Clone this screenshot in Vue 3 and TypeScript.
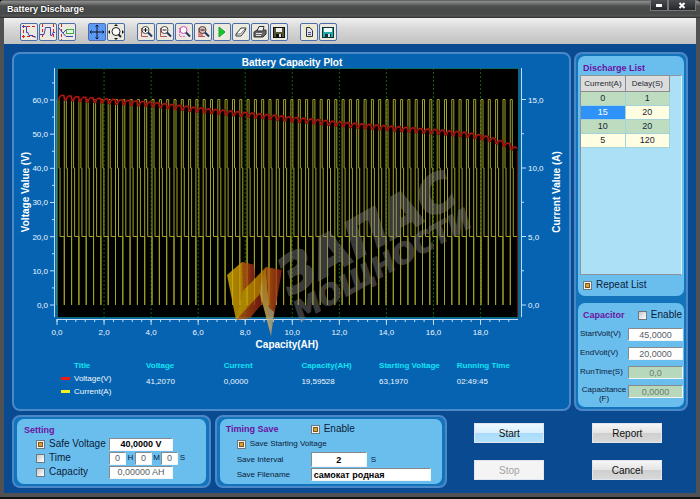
<script setup lang="ts">
import { ref } from 'vue'

// ---- Chart geometry -------------------------------------------------
const PLOT = { left: 43, right: 504, top: 14, bottom: 263 }
const ZERO_Y = 251
const sx = (ah: number): number => PLOT.left + ah * 23.53
const sv = (volt: number): number => ZERO_Y - volt * 3.417
const sa = (amp: number): number => ZERO_Y - amp * 13.7

const fmt = (n: number): string => n.toFixed(1).replace('.', ',')

const voltTicks = [0, 10, 20, 30, 40, 50, 60]
const voltMinor = [5, 15, 25, 35, 45, 55, 65]
const ampTicks = [0, 5, 10, 15]
const ampMinor = [2.5, 7.5, 12.5]
const ahTicks = [0, 2, 4, 6, 8, 10, 12, 14, 16, 18]
const ahMinor = Array.from({ length: 50 }, (_, i) => i * 0.4).filter((v) => v < 19.6)

// ---- Series ---------------------------------------------------------
const CYCLES = 63
const CYCLE_AH = 0.3107

const current = (() => {
  const pts: string[] = []
  for (let i = 0; i < CYCLES; i++) {
    const x = sx(i * CYCLE_AH)
    const end = Math.min(x + 7.3, PLOT.right)
    pts.push(
      `${x.toFixed(1)},${sa(0)}`,
      `${x.toFixed(1)},${sa(15)}`,
      `${(x + 2).toFixed(1)},${sa(15)}`,
      `${(x + 2).toFixed(1)},${sa(10)}`,
      `${(x + 3).toFixed(1)},${sa(10)}`,
      `${(x + 3).toFixed(1)},${sa(5)}`,
      `${end.toFixed(1)},${sa(5)}`,
    )
  }
  return pts.join(' ')
})()

const envelope: [number, number][] = [
  [43, 42], [66, 44], [106, 47], [136, 49], [186, 55], [226, 59], [286, 65],
  [336, 70], [386, 74], [426, 77], [456, 80], [476, 84], [496, 91], [504, 96],
]

const envelopeAt = (x: number): number => {
  for (let i = 1; i < envelope.length; i++) {
    const [x0, y0] = envelope[i - 1]
    const [x1, y1] = envelope[i]
    if (x <= x1) return y0 + ((y1 - y0) * (x - x0)) / (x1 - x0)
  }
  return envelope[envelope.length - 1][1]
}

const voltage = (() => {
  const pts: string[] = [`43,${envelopeAt(43) + 3}`]
  for (let i = 0; i < CYCLES; i++) {
    const x = sx(i * CYCLE_AH)
    const steps: [number, number][] = [[0.3, 3], [2, 3], [2.4, 1], [3.4, 0], [4.4, -1], [7, -1]]
    for (const [dx, dy] of steps) {
      const px = Math.min(x + dx, PLOT.right)
      pts.push(`${px.toFixed(1)},${(envelopeAt(px) + dy).toFixed(1)}`)
    }
  }
  return pts.join(' ')
})()

// ---- Readouts -------------------------------------------------------
const readouts = [
  { title: 'Voltage', value: '41,2070' },
  { title: 'Current', value: '0,0000' },
  { title: 'Capacity(AH)', value: '19,59528' },
  { title: 'Starting Voltage', value: '63,1970' },
  { title: 'Running Time', value: '02:49:45' },
]

const steps = [
  { current: 0, delay: 1 },
  { current: 15, delay: 20 },
  { current: 10, delay: 20 },
  { current: 5, delay: 120 },
]
const selected = ref(1)

// ---- Form state -----------------------------------------------------
const repeatList = ref(true)
const capEnable = ref(false)
const startVolt = ref('45,0000')
const endVolt = ref('20,0000')
const runTime = ref('0,0')
const capacitance = ref('0,0000')
const useSafeVoltage = ref(true)
const safeVoltage = ref('40,0000 V')
const useTime = ref(false)
const hours = ref('0')
const minutes = ref('0')
const seconds = ref('0')
const useCapacity = ref(false)
const capacityLimit = ref('0,00000 AH')
const timingEnable = ref(true)
const saveStarting = ref(true)
const saveInterval = ref('2')
const fileName = ref('самокат родная')
</script>

<template>
  <div class="window">
    <header class="titlebar">
      <h1>Battery Discharge</h1>
      <div class="winbtns">
        <button type="button" class="min" aria-label="Minimize">
          <svg width="8" height="6" viewBox="0 0 8 6"><rect x="1" y="2" width="6" height="3" fill="#fff" /></svg>
        </button>
        <button type="button" class="close" aria-label="Close">
          <svg width="8" height="7" viewBox="0 0 8 7"><path d="M1.5 1L6.5 6M6.5 1L1.5 6" stroke="#fff" stroke-width="2" /></svg>
        </button>
      </div>
    </header>

    <nav class="toolbar" aria-label="Tools">
      <div class="group">
        <button type="button" aria-label="Vertical cursors">
          <svg viewBox="0 0 16 16"><path d="M1 2.500H15M1 12.500H15M2.500 1V15" stroke="#d22" stroke-dasharray="3 2" /><path d="M1 2.500H5.500V8.500H7L8 11.500H12L13 13H15" fill="none" stroke="#44b" /></svg>
        </button>
        <button type="button" aria-label="Range cursors">
          <svg viewBox="0 0 16 16"><path d="M2.500 0V15M13.500 0V15" stroke="#d22" stroke-dasharray="3 2" /><path d="M0 10.500H4L5.500 3.500H10.500V11.500H12L13 8.500H15" fill="none" stroke="#44b" /></svg>
        </button>
        <button type="button" aria-label="Data label">
          <svg viewBox="0 0 16 16"><path d="M2.500 0V16" stroke="#d22" stroke-dasharray="3 2" /><path d="M0 4L3 8L7 12.500H14M4 9L8 5" fill="none" stroke="#44b" /><rect x="7.500" y="5.500" width="7" height="4" fill="#e8f6e4" stroke="#4a4" /></svg>
        </button>
      </div>
      <div class="group">
        <button type="button" class="on" aria-label="Pan">
          <svg viewBox="0 0 16 16"><path d="M8 1V15M1 8H15M6.500 2.500L8 1L9.500 2.500M6.500 13.500L8 15L9.500 13.500M2.500 6.500L1 8L2.500 9.500M13.500 6.500L15 8L13.500 9.500" fill="none" stroke="#112" /></svg>
        </button>
        <button type="button" aria-label="Zoom window">
          <svg viewBox="0 0 16 16"><circle cx="8" cy="7.500" r="4" fill="#fff" stroke="#222" /><path d="M10.500 10.500L13 13" stroke="#222" stroke-width="2" /><path d="M8 0L10 2H6ZM8 16L10 14H6ZM0 8L2 6V10ZM16 8L14 6V10Z" fill="#111" /></svg>
        </button>
      </div>
      <div class="group">
        <button v-for="kind in ['in', 'out', 'box', 'reset']" :key="kind" type="button" :aria-label="'Zoom ' + kind">
          <svg viewBox="0 0 16 16">
            <path d="M3.500 4V12.500H10" fill="none" :stroke="kind === 'box' ? '#e6c' : '#b55'" :stroke-dasharray="kind === 'box' ? '2 1' : undefined" />
            <path v-if="kind === 'reset'" d="M3 4H8V12H3Z" fill="#d88" />
            <circle cx="7.500" cy="6" r="3.500" :fill="kind === 'reset' ? '#dbb' : '#fff'" :stroke="kind === 'box' ? '#c4b' : '#444'" />
            <path d="M10 8.500L14 12.500" stroke="#236" stroke-width="2" />
            <path v-if="kind !== 'box'" d="M5.500 6H9.500" stroke="#111" />
            <path v-if="kind === 'in'" d="M7.500 4V8" stroke="#111" />
          </svg>
        </button>
        <button type="button" aria-label="Run">
          <svg viewBox="0 0 16 16"><path d="M5 3L11 8L5 13Z" fill="#1c2" stroke="#294" /></svg>
        </button>
        <button type="button" aria-label="Clear">
          <svg viewBox="0 0 16 16"><path d="M3 10L8 4H13L12 7L8 12H3Z" fill="#fff" stroke="#333" /><path d="M3 10H7.500L13 4" fill="none" stroke="#666" /></svg>
        </button>
        <button type="button" aria-label="Print">
          <svg viewBox="0 0 16 16"><path d="M2 8L5 6H14V10L11 13H2Z" fill="#666" stroke="#333" /><path d="M5 7L7 2.500H12L11 7Z" fill="#eee" stroke="#333" /><path d="M4 9.500H10M4 11.500H9" stroke="#ddd" /></svg>
        </button>
        <button type="button" aria-label="Save">
          <svg viewBox="0 0 16 16"><rect x="2.500" y="3.500" width="11" height="10" fill="#553" stroke="#111" /><rect x="5" y="4" width="6" height="4" fill="#eee" /><rect x="5" y="10" width="6" height="3" fill="#111" /><rect x="8" y="10" width="2" height="3" fill="#ddd" /></svg>
        </button>
      </div>
      <div class="group">
        <button type="button" aria-label="Copy report">
          <svg viewBox="0 0 16 16"><path d="M2 2L14 14M14 2L2 14M8 1V15" stroke="#ee5" stroke-dasharray="2 1" /><path d="M5.500 3.500H9L11.500 6.500V12.500H5.500Z" fill="#dde" stroke="#333" /><path d="M7 8.500H10M7 10.500H10" stroke="#558" /></svg>
        </button>
        <button type="button" aria-label="Save data">
          <svg viewBox="0 0 16 16"><rect x="2.500" y="3.500" width="11" height="10" fill="#2aa" stroke="#133" /><rect x="4" y="4" width="8" height="4" fill="#eff" /><rect x="5" y="10" width="6" height="3" fill="#134" /><rect x="8" y="10" width="2" height="3" fill="#ddd" /></svg>
        </button>
      </div>
    </nav>

    <main class="body">
      <div class="upper">
        <section class="panel chart-panel" aria-label="Battery Capacity Plot">
          <svg class="chart" viewBox="0 0 555 298">
            <defs>
              <linearGradient id="leafA" x1="0" y1="0" x2="1" y2="0"><stop offset="0" stop-color="#d8b400" /><stop offset="1" stop-color="#c07400" /></linearGradient>
              <linearGradient id="leafB" x1="0" y1="0" x2="1" y2="0"><stop offset="0" stop-color="#c86a10" /><stop offset="1" stop-color="#8a1c14" /></linearGradient>
              <linearGradient id="leafC" x1="0" y1="0" x2="0" y2="1"><stop offset="0" stop-color="#c88410" /><stop offset="1" stop-color="#d8c070" /></linearGradient>
            </defs>
            <text class="heading" x="278" y="12" text-anchor="middle">Battery Capacity Plot</text>

            <rect x="43" y="14" width="461" height="249" fill="#000" />
            <g class="grid">
              <line v-for="t in ahTicks.slice(1)" :key="t" :x1="sx(t)" :x2="sx(t)" :y1="PLOT.top" :y2="PLOT.bottom" />
            </g>
            <polyline class="current" :points="current" />
            <path d="M503.500 96V263" stroke="#700c10" />
            <polyline class="volt-shade" :points="voltage" />
            <polyline class="voltage" :points="voltage" />
            <rect x="43.500" y="14.500" width="461" height="249" fill="none" stroke="#0b6a68" />

            <g class="axis">
              <path d="M40.500 14V263M507.500 14V263M43 265.500H504" />
              <line v-for="t in voltTicks" :key="'v' + t" x1="36" x2="40" :y1="sv(t)" :y2="sv(t)" />
              <line v-for="t in voltMinor" :key="'vm' + t" x1="38" x2="40" :y1="sv(t)" :y2="sv(t)" />
              <line v-for="t in ampTicks" :key="'a' + t" x1="508" x2="512" :y1="sa(t)" :y2="sa(t)" />
              <line v-for="t in ampMinor" :key="'am' + t" x1="508" x2="510" :y1="sa(t)" :y2="sa(t)" />
              <line v-for="t in ahTicks" :key="'x' + t" :x1="sx(t)" :x2="sx(t)" y1="265" y2="271" />
              <line v-for="t in ahMinor" :key="'xm' + t" :x1="sx(t)" :x2="sx(t)" y1="265" y2="268" />
            </g>
            <g class="ticktext">
              <text v-for="t in voltTicks" :key="'v' + t" x="34" :y="sv(t) + 3" text-anchor="end">{{ fmt(t) }}</text>
              <text v-for="t in ampTicks" :key="'a' + t" x="514" :y="sa(t) + 3">{{ fmt(t) }}</text>
              <text v-for="t in ahTicks" :key="'x' + t" :x="sx(t)" y="281" text-anchor="middle">{{ fmt(t) }}</text>
            </g>

            <g opacity="0.8">
              <path d="M213 221L228 208L240 211L241 223L229 240L222 266Z" fill="url(#leafA)" />
              <path d="M228 208L240 211L241 224L229 238Z" fill="url(#leafB)" />
              <path d="M222 265L229 237L252 213L248 238L246 250L236 264Z" fill="url(#leafA)" />
              <path d="M222 266L246 240L248 250L236 264Z" fill="url(#leafB)" />
              <path d="M245 236L252 213L257 282Z" fill="url(#leafC)" />
              <path d="M252 213L268 216L260 262L257 282Z" fill="url(#leafB)" />
              <path d="M253 252L260 258L257 282Z" fill="#b9a878" />
            </g>
            <g class="watermark">
              <text class="big" transform="translate(276 242) rotate(-29)">ЗАПАС</text>
              <text class="small" transform="translate(286 268) rotate(-29)">МОЩНОСТИ</text>
            </g>

            <text class="heading" x="273" y="294" text-anchor="middle">Capacity(AH)</text>
            <text class="heading" transform="translate(15 138) rotate(-90)" text-anchor="middle">Voltage Value (V)</text>
            <text class="heading" transform="translate(546 138) rotate(-90)" text-anchor="middle">Current Value (A)</text>
          </svg>

          <table class="readouts">
            <thead>
              <tr>
                <th class="first">Title</th>
                <th v-for="r in readouts" :key="r.title" class="col">{{ r.title }}</th>
              </tr>
            </thead>
            <tbody>
              <tr>
                <td class="legend red">Voltage(V)</td>
                <td v-for="r in readouts" :key="r.title" rowspan="2" class="value">{{ r.value }}</td>
              </tr>
              <tr>
                <td class="legend yellow">Current(A)</td>
              </tr>
            </tbody>
          </table>
        </section>

        <aside class="panel side">
          <section class="card list-card">
            <h2>Discharge List</h2>
            <div class="listbox">
              <table>
                <thead>
                  <tr><th>Current(A)</th><th>Delay(S)</th></tr>
                </thead>
                <tbody>
                  <tr v-for="(s, i) in steps" :key="i" @click="selected = i">
                    <td :class="{ sel: selected === i }">{{ s.current }}</td>
                    <td>{{ s.delay }}</td>
                  </tr>
                </tbody>
              </table>
            </div>
            <label class="check"><input v-model="repeatList" type="checkbox" />Repeat List</label>
          </section>

          <section class="card cap-card">
            <div class="cap-head">
              <h2>Capacitor</h2>
              <label class="check"><input v-model="capEnable" type="checkbox" />Enable</label>
            </div>
            <div class="cap-grid">
              <label for="sv">StartVolt(V)</label><input id="sv" v-model="startVolt" type="text" />
              <label for="ev">EndVolt(V)</label><input id="ev" v-model="endVolt" type="text" />
              <label for="rt">RunTime(S)</label><input id="rt" v-model="runTime" class="ro" type="text" readonly />
              <label for="cp" class="two">Capacitance<br />(F)</label><input id="cp" v-model="capacitance" class="ro" type="text" readonly />
            </div>
          </section>
        </aside>
      </div>

      <div class="lower">
        <section class="panel">
          <div class="card setting">
            <h2>Setting</h2>
            <div class="srow">
              <label class="check"><input v-model="useSafeVoltage" type="checkbox" />Safe Voltage</label>
              <input v-model="safeVoltage" class="strong" type="text" aria-label="Safe Voltage value" />
            </div>
            <div class="srow">
              <label class="check"><input v-model="useTime" type="checkbox" />Time</label>
              <div class="hms">
                <input id="hh" v-model="hours" type="text" /><label for="hh">H</label>
                <input id="mm" v-model="minutes" type="text" /><label for="mm">M</label>
                <input id="ss" v-model="seconds" type="text" /><label for="ss">S</label>
              </div>
            </div>
            <div class="srow">
              <label class="check"><input v-model="useCapacity" type="checkbox" />Capacity</label>
              <input v-model="capacityLimit" type="text" aria-label="Capacity value" />
            </div>
          </div>
        </section>

        <section class="panel">
          <div class="card timing">
            <div class="trow">
              <h2>Timing Save</h2>
              <label class="check"><input v-model="timingEnable" type="checkbox" />Enable</label>
            </div>
            <label class="check tiny"><input v-model="saveStarting" type="checkbox" />Save Starting Voltage</label>
            <div class="trow indent">
              <label for="si">Save Interval</label>
              <div class="interval"><input id="si" v-model="saveInterval" class="strong" type="text" /><span>S</span></div>
            </div>
            <div class="trow indent">
              <label for="fn">Save Filename</label>
              <input id="fn" v-model="fileName" class="strong file" type="text" />
            </div>
          </div>
        </section>

        <div class="actions">
          <button type="button" class="primary">Start</button>
          <button type="button">Report</button>
          <button type="button" disabled>Stop</button>
          <button type="button">Cancel</button>
        </div>
      </div>
    </main>
  </div>
</template>

<style>
body {
  margin: 0;
  background: #111;
}
</style>

<style scoped>
.window,
.window * {
  box-sizing: border-box;
}
.window {
  display: flex;
  flex-direction: column;
  min-height: 100vh;
  padding: 0 4px 4px;
  background: #4f5152;
  border-bottom: 2px solid #111;
  border-radius: 4px 4px 0 0;
  font-family: 'Liberation Sans', Arial, sans-serif;
  font-size: 10px;
  line-height: 12px;
  color: #0a2038;
}
h1,
h2 {
  margin: 0;
  font-weight: bold;
}
input,
button {
  font-family: inherit;
  margin: 0;
}

.titlebar {
  display: flex;
  justify-content: space-between;
  align-items: center;
  height: 18px;
  margin: 0 -4px;
  padding: 0 4px 0 7px;
  background: linear-gradient(#3c3c3c 0, #8c8c8c 1px, #7a7a7a 3px, #4c4e4e 6px, #484a4a 14px, #555 16px, #2c2c2c 18px);
  border-radius: 4px 4px 0 0;
}
.titlebar h1 {
  font-size: 9px;
  line-height: 16px;
  color: #fff;
  text-shadow: 0 0 2px #000;
}
.winbtns {
  display: flex;
  align-self: flex-start;
}
.winbtns button {
  display: flex;
  align-items: center;
  justify-content: center;
  height: 11px;
  padding: 0;
  background: linear-gradient(#4a4d50, #24282c);
  border: 1px solid #777;
  border-top: 0;
}
.min {
  width: 18px;
}
.close {
  width: 28px;
}

.toolbar {
  display: flex;
  gap: 12px;
  align-items: flex-end;
  height: 26px;
  padding: 0 16px 3px;
  background: linear-gradient(#f0f0f0, #d8d8d8 40%, #c2c2c2);
}
.group {
  display: flex;
  gap: 1px;
}
.group button {
  width: 18px;
  height: 18px;
  padding: 0;
  background: #ece9e0;
  border: 1px solid #4a6fa8;
  border-radius: 2px;
}
.group button.on {
  background: #5b9bf5;
}
.group svg {
  display: block;
  width: 16px;
  height: 16px;
}

.body {
  flex: 1;
  display: flex;
  flex-direction: column;
  gap: 4px;
  padding: 8px 8px 5px;
  background: #0a4a90;
}
.upper {
  display: grid;
  grid-template-columns: minmax(0, 1fr) 114px;
  gap: 3px;
}
.panel {
  border: 2px solid #4a88c8;
  border-radius: 8px;
  background: #1373bb;
}
.chart-panel {
  background: #0563b1;
  padding-bottom: 11px;
}
.chart {
  display: block;
  width: 100%;
  height: auto;
}
.heading {
  font-size: 10px;
  font-weight: bold;
  fill: #fff;
}
.ticktext {
  font-size: 8px;
  fill: #f0f8ff;
}
.grid line {
  stroke: #0b6410;
  stroke-dasharray: 2 2;
}
.axis {
  fill: none;
  stroke: #c3ddf3;
}
.current {
  fill: none;
  stroke: #a3a326;
}
.volt-shade {
  fill: none;
  stroke: #6c0a06;
  stroke-width: 2;
}
.voltage {
  fill: none;
  stroke: #c01c14;
}
.watermark {
  font-family: 'DejaVu Sans', sans-serif;
  font-weight: bold;
  font-style: italic;
  fill: #808080;
  stroke: #808080;
  opacity: 0.45;
}
.big {
  font-size: 51px;
  stroke-width: 2;
}
.small {
  font-size: 28px;
  stroke-width: 1;
}

.readouts {
  width: 100%;
  table-layout: fixed;
  border-collapse: collapse;
  margin-top: 7px;
  font-size: 8px;
  color: #f0f8ff;
}
.readouts th,
.readouts td {
  padding: 0;
  text-align: left;
  white-space: nowrap;
  height: 13px;
  line-height: 13px;
}
.readouts th {
  color: #12e4f4;
}
.readouts .first {
  width: 132px;
  padding-left: 60px;
}
.readouts .col {
  width: 14%;
}
.readouts .col:last-child {
  width: auto;
}
.readouts .value {
  vertical-align: top;
  line-height: 19px;
}
.readouts .legend {
  padding-left: 60px;
}
.legend::before {
  content: '';
  display: inline-block;
  width: 9px;
  height: 3px;
  margin: 0 4px 0 -13px;
  vertical-align: 1px;
}
.red::before {
  background: #f01818;
}
.yellow::before {
  background: #f4f020;
}

.side {
  display: flex;
  flex-direction: column;
  gap: 7px;
  padding: 2px;
}
.card {
  background: #6abeee;
  border-radius: 7px;
}
.card h2 {
  font-size: 9px;
  line-height: 12px;
  color: #6a12a0;
}
.list-card {
  flex: 1;
  display: flex;
  flex-direction: column;
  padding: 6px 2px 4px;
}
.list-card h2 {
  padding-left: 3px;
}
.listbox {
  flex: 1;
  margin-top: 1px;
  background: #ace0f6;
  border: 1px solid #8a9499;
  border-right-color: #dff3fc;
}
.listbox table {
  width: 89%;
  table-layout: fixed;
  border-collapse: collapse;
  font-size: 9px;
  line-height: 13px;
  text-align: center;
  color: #1c2830;
}
.listbox th {
  height: 15px;
  padding: 0;
  font-size: 8px;
  font-weight: normal;
  background: #dcdcdc;
  border: 1px solid #8c8c8c;
  border-width: 0 1px 1px 0;
}
.listbox td {
  height: 14px;
  padding: 0;
  border: 1px solid #a4d4da;
  border-width: 0 1px 1px 0;
  background: #fffde2;
}
.listbox tbody tr:nth-child(odd) td {
  background: #bedcc0;
}
.listbox tbody tr td.sel {
  background: #2e92f8;
  color: #fff;
}
.check {
  display: flex;
  align-items: center;
  gap: 4px;
  font-size: 10px;
  line-height: 14px;
  white-space: nowrap;
}
.list-card .check {
  margin-top: 3px;
  padding-left: 3px;
}
input[type='checkbox'] {
  appearance: none;
  flex: none;
  width: 9px;
  height: 9px;
  border: 1px solid #6e7880;
  background: linear-gradient(135deg, #c4c8cc, #fff);
}
input[type='checkbox']:checked {
  background: linear-gradient(#e79a26, #e79a26) center / 3px 3px no-repeat, linear-gradient(#765a30, #765a30) center / 5px 5px no-repeat, #f2f2ee;
}
input[type='text'] {
  min-width: 0;
  width: 100%;
  height: 13px;
  padding: 0;
  font-size: 9px;
  line-height: 11px;
  text-align: center;
  color: #5a6066;
  background: #fff;
  border: 1px solid #f4f4f4;
  border-top-color: #858a8e;
  border-left-color: #858a8e;
  border-radius: 0;
  outline: 0;
}
input[type='text'].strong {
  color: #000;
  font-weight: bold;
}
input[type='text'].ro {
  background: #b8d8bc;
  color: #6e7e72;
}

.cap-card {
  padding: 5px 1px 5px 2px;
}
.cap-head {
  display: flex;
  justify-content: space-between;
  align-items: center;
  padding: 0 1px 0 3px;
}
.cap-grid {
  display: grid;
  grid-template-columns: 48px minmax(0, 1fr);
  grid-auto-rows: 13px;
  row-gap: 6px;
  margin-top: 6px;
  padding-bottom: 4px;
  font-size: 8px;
  line-height: 11px;
  white-space: nowrap;
}
.cap-grid .two {
  line-height: 9px;
  text-align: center;
}

.lower {
  display: grid;
  grid-template-columns: 199fr 233fr 237fr;
  gap: 4px;
}
.lower .card {
  height: 100%;
  padding: 4px;
}
.lower .panel {
  padding: 2px 3px;
  height: 73px;
}
.lower .setting {
  display: flex;
  flex-direction: column;
  gap: 1px;
  padding: 5px 6px 5px 7px;
}
.srow {
  display: grid;
  grid-template-columns: 73px 64px;
  height: 13px;
  align-items: center;
  padding-left: 12px;
}
.hms {
  display: grid;
  grid-template-columns: 17px 9px 17px 9px 17px 9px;
  align-items: center;
  text-align: center;
  font-size: 8px;
}
.lower .timing {
  display: flex;
  flex-direction: column;
  gap: 1px;
  padding: 3px 11px 3px 6px;
}
.trow {
  display: grid;
  grid-template-columns: 85px minmax(0, 1fr);
  align-items: center;
  font-size: 8px;
}
.trow.indent {
  padding-left: 11px;
  grid-template-columns: 74px minmax(0, 1fr);
}
.check.tiny {
  padding-left: 11px;
  font-size: 8px;
}
.interval {
  display: flex;
  align-items: center;
  gap: 4px;
}
.interval input[type='text'] {
  width: 56px;
  height: 15px;
}
.timing input[type='text'].file {
  padding-left: 2px;
  text-align: left;
}
.actions {
  display: grid;
  grid-template-columns: 70px 70px;
  grid-auto-rows: 20px;
  gap: 17px 48px;
  justify-content: start;
  align-content: center;
  padding-left: 23px;
}
.actions button {
  padding: 0;
  font-size: 10px;
  color: #111;
  background: linear-gradient(#f6f6f6, #e4e4e4 50%, #cfcfcf 51%, #d8d8d8);
  border: 1px solid #dfe6ee;
}
.actions .primary {
  background: linear-gradient(#eef9ff, #d8f0fd 50%, #a8dcfa 51%, #b4e2fb);
}
.actions button:disabled {
  background: #f4f4f4;
  color: #a2a2a2;
}
</style>
